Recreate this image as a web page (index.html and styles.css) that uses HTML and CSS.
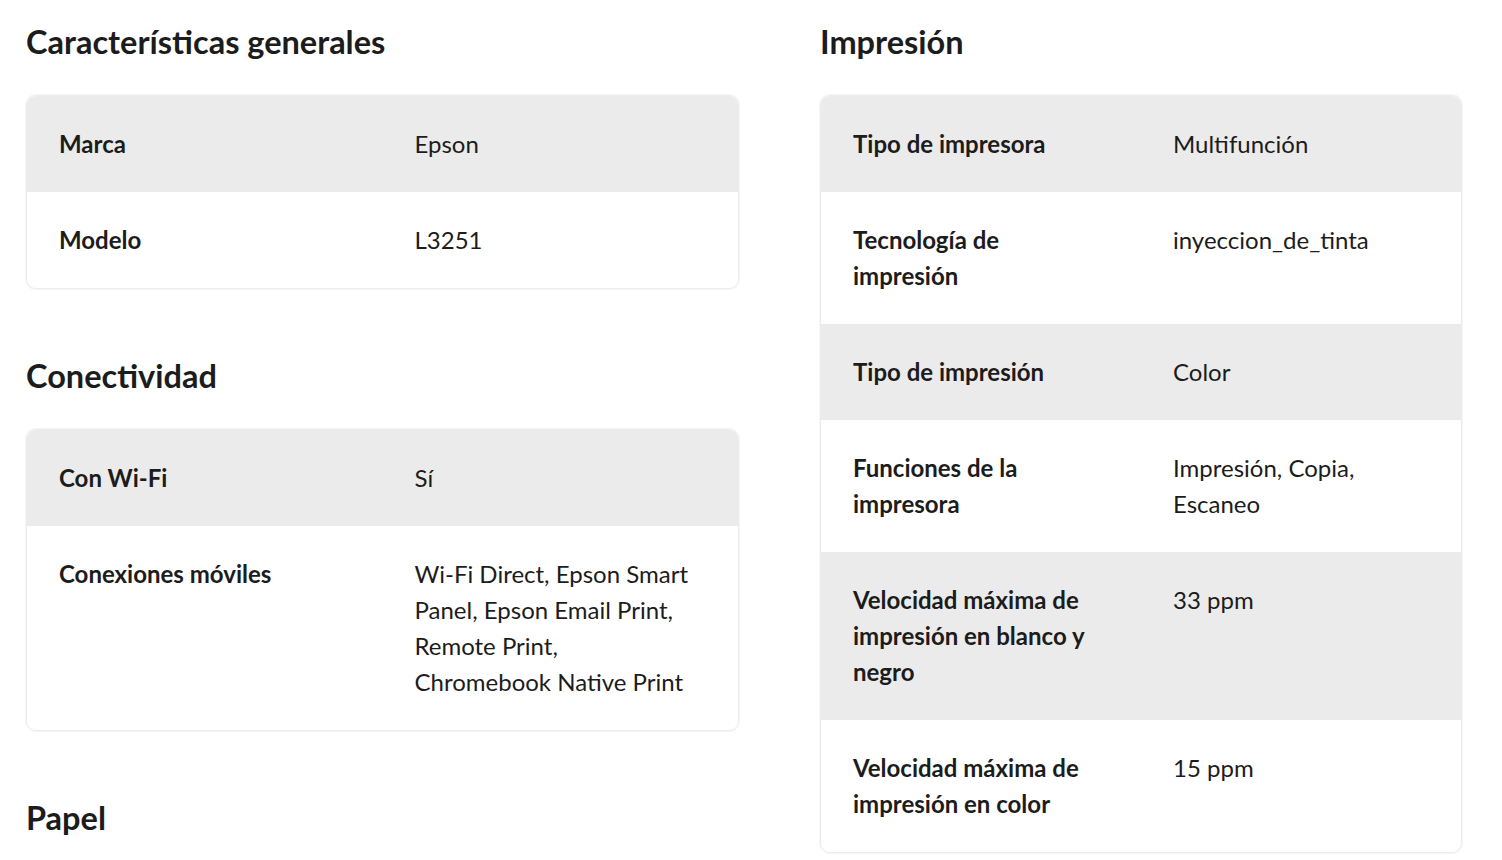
FILE: index.html
```html
<!DOCTYPE html>
<html lang="es">
<head>
<meta charset="utf-8">
<title>Especificaciones</title>
<link rel="stylesheet" href="styles.css">
</head>
<body>
<div class="page">
  <div class="col col-left">
    <section class="section">
      <h2 class="title">Características generales</h2>
      <div class="card">
        <div class="row odd"><div class="key">Marca</div><div class="val">Epson</div></div>
        <div class="row"><div class="key">Modelo</div><div class="val">L3251</div></div>
      </div>
    </section>
    <section class="section">
      <h2 class="title">Conectividad</h2>
      <div class="card">
        <div class="row odd"><div class="key">Con Wi-Fi</div><div class="val">Sí</div></div>
        <div class="row"><div class="key">Conexiones móviles</div><div class="val">Wi-Fi Direct, Epson Smart Panel, Epson Email Print, Remote Print, Chromebook Native Print</div></div>
      </div>
    </section>
    <section class="section">
      <h2 class="title">Papel</h2>
    </section>
  </div>
  <div class="col col-right">
    <section class="section">
      <h2 class="title">Impresión</h2>
      <div class="card">
        <div class="row odd"><div class="key">Tipo de impresora</div><div class="val">Multifunción</div></div>
        <div class="row"><div class="key">Tecnología de impresión</div><div class="val">inyeccion_de_tinta</div></div>
        <div class="row odd"><div class="key">Tipo de impresión</div><div class="val">Color</div></div>
        <div class="row"><div class="key">Funciones de la impresora</div><div class="val">Impresión, Copia, Escaneo</div></div>
        <div class="row odd"><div class="key">Velocidad máxima de impresión en blanco y negro</div><div class="val">33 ppm</div></div>
        <div class="row"><div class="key">Velocidad máxima de impresión en color</div><div class="val">15 ppm</div></div>
      </div>
    </section>
  </div>
</div>
</body>
</html>
```
FILE: styles.css
```css
html, body {
  margin: 0;
  padding: 0;
  background: #ffffff;
}
body {
  font-family: Lato, "Liberation Sans", sans-serif;
  color: #1c1c1c;
  overflow: hidden;
  height: 860px;
}
.page {
  display: grid;
  grid-template-columns: 713px 642px;
  column-gap: 81px;
  padding: 22px 40px 0 26px;
  align-items: start;
}
.section {
  margin-bottom: 67px;
}
.title {
  margin: 0 0 33px 0;
  font-size: 32.5px;
  line-height: 40px;
  font-weight: 700;
  color: #1c1c1c;
}
.card {
  border: 1px solid #ececec;
  box-shadow: 0 0 0 1px #f6f6f6;
  border-radius: 10px;
  overflow: hidden;
  margin-top: 1px;
}
.row {
  display: grid;
  grid-template-columns: 1fr 1fr;
  background: #ffffff;
}
.row.odd {
  background: #ebebeb;
}
.key, .val {
  padding: 30px 32px;
  font-size: 24px;
  line-height: 36px;
}
.key {
  font-weight: 700;
}
.val {
  font-weight: 400;
  padding-right: 48px;
}
```
